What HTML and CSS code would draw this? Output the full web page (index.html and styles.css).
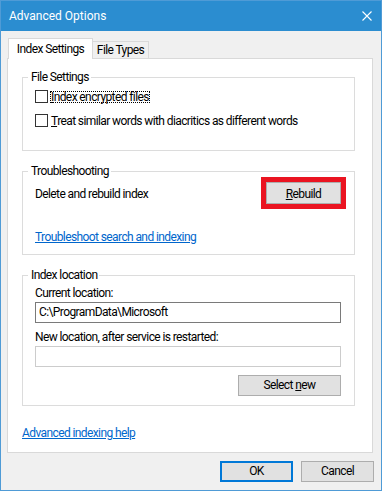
FILE: index.html
```html
<!DOCTYPE html>
<html>
<head>
<meta charset="utf-8">
<link rel="stylesheet" href="styles.css">
</head>
<body>
<div class="window">
  <div class="titlebar">
    <span class="title">Advanced Options</span>
    <svg class="close" width="10" height="10" viewBox="0 0 10 10"><path d="M0.5 0.5 L9.5 9.5 M9.5 0.5 L0.5 9.5" stroke="#fff" stroke-width="1.1" fill="none"/></svg>
  </div>
  <div class="client">
    <div class="tabs">
      <div class="tab active">Index Settings</div>
      <div class="tab">File Types</div>
    </div>
    <div class="panel">
      <div class="group g-files">
        <div class="group-title">File Settings</div>
        <div class="check-row"><span class="box"></span><span class="check-label focused"><u>I</u>ndex encrypted files</span></div>
        <div class="check-row second"><span class="box"></span><span class="check-label"><u>T</u>reat similar words with diacritics as different words</span></div>
      </div>
      <div class="group g-trouble">
        <div class="group-title">Troubleshooting</div>
        <div class="rebuild-row">
          <span class="text">Delete and rebuild index</span>
          <button class="btn rebuild"><u>R</u>ebuild</button>
        </div>
        <a class="link trouble-link" href="#">Troubleshoot search and indexing</a>
      </div>
      <div class="group g-location">
        <div class="group-title">Index location</div>
        <div class="text">Current location:</div>
        <div class="textbox">C:\ProgramData\Microsoft</div>
        <div class="text new-label">New location, after service is restarted:</div>
        <div class="textbox disabled"></div>
        <div class="select-row"><button class="btn select-new">Select <u>n</u>ew</button></div>
      </div>
      <a class="link help-link" href="#">Advanced indexing help</a>
    </div>
    <div class="footer">
      <button class="btn ok">OK</button>
      <button class="btn cancel">Cancel</button>
    </div>
  </div>
</div>
</body>
</html>
```
FILE: styles.css
```css
* { box-sizing: border-box; }
html, body { margin: 0; padding: 0; background: #f0f0f0; }
body {
  font-family: Roboto, "Liberation Sans", sans-serif;
  font-size: 12px;
  color: #000;
}
.window {
  width: 382px;
  height: 491px;
  border: 1px solid #4f9bd6;
  background: #f0f0f0;
  display: flex;
  flex-direction: column;
}
.titlebar {
  height: 30px;
  background: #2b8dd0;
  display: flex;
  align-items: center;
  justify-content: space-between;
  padding: 0 9px 0 8px;
  flex: none;
}
.title { color: #fff; font-size: 12px; line-height: 15px; }
.close { display: block; margin-top: -1px; }
.client {
  flex: 1;
  display: flex;
  flex-direction: column;
  padding: 7px 7px 8px 6px;
  letter-spacing: -0.6px;
}
.tabs {
  display: flex;
  align-items: flex-end;
  height: 20px;
  padding-left: 1px;
}
.tab {
  border: 1px solid #d9d9d9;
  border-bottom: none;
  display: flex;
  align-items: center;
  justify-content: center;
  line-height: 15px;
}
.tab.active {
  width: 85px;
  height: 21px;
  background: #fff;
  margin-bottom: -1px;
  position: relative;
  z-index: 1;
}
.tab:not(.active) {
  width: 57px;
  height: 17px;
  margin-left: -1px;
  background: #f0f0f0;
  padding-top: 1px;
}
.panel {
  width: 366px;
  height: 395px;
  background: #fff;
  border: 1px solid #d9d9d9;
  padding: 18px 17px 11px 14px;
  display: flex;
  flex-direction: column;
}
.group {
  border: 1px solid #dcdcdc;
  position: relative;
  padding-left: 12px;
  padding-right: 13px;
  line-height: 15px;
}
.group-title {
  position: absolute;
  top: -8px;
  left: 5px;
  padding: 0 2px 0 3px;
  background: #fff;
  line-height: 15px;
}
.g-files { height: 74px; padding-top: 11px; }
.g-trouble { height: 84px; margin-top: 20px; padding-top: 10px; }
.g-location { height: 131px; margin-top: 20px; padding-top: 10px; }
.check-row {
  display: flex;
  align-items: center;
  height: 15px;
}
.check-row.second { margin-top: 9px; }
.box {
  width: 13px;
  height: 13px;
  border: 1px solid #333;
  background: #fff;
  flex: none;
}
.check-label {
  margin-left: 2px;
  border: 1px dotted transparent;
  line-height: 10px;
  padding-left: 0;
}
.check-label.focused { border-color: #000; }
u { text-decoration: underline; text-underline-offset: 1px; }
.rebuild-row {
  display: flex;
  align-items: center;
  justify-content: space-between;
  height: 22px;
}
.rebuild-row .text { padding-top: 2px; }
.btn {
  font-family: inherit;
  font-size: 12px;
  letter-spacing: inherit;
  color: #000;
  background: #e1e1e1;
  border: 1px solid #adadad;
  padding: 0;
  margin: 0;
  line-height: 15px;
  border-radius: 0;
}
.rebuild {
  width: 75px;
  height: 22px;
  outline: 5px solid #ea1421;
  outline-offset: 0;
  padding-top: 2px;
}
.link {
  color: #0066cc;
  text-decoration: underline;
  text-underline-offset: 1px;
  line-height: 15px;
  align-self: flex-start;
}
.trouble-link { display: inline-block; margin-top: 26px; }
.textbox {
  margin-top: 1px;
  height: 21px;
  width: 306px;
  border: 1px solid #7a7a7a;
  background: #fff;
  padding-left: 3px;
  line-height: 19px;
}
.textbox.disabled { border-color: #cccccc; }
.new-label { margin-top: 7px; }
.select-row {
  display: flex;
  justify-content: flex-end;
  margin-top: 8px;
}
.select-new { width: 103px; height: 21px; }
.help-link { margin-top: 20px; }
.footer {
  display: flex;
  justify-content: flex-end;
  gap: 8px;
  margin-top: 8px;
}
.ok, .cancel { width: 73px; height: 21px; }
.ok { border: 2px solid #0078d7; }
```
